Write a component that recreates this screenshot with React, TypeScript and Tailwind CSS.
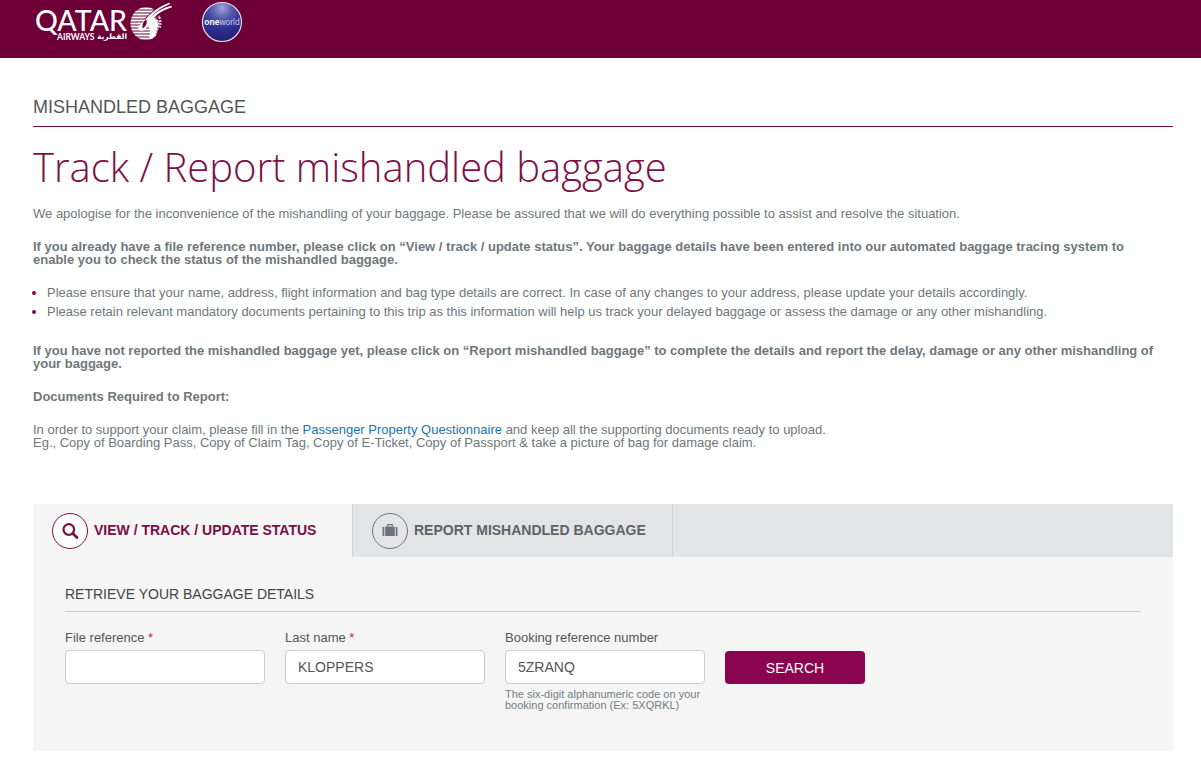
import { useState, type ReactNode } from "react";

function QatarLogo() {
  return (
    <svg viewBox="0 0 140 44" className="h-11 w-[140px]" role="img" aria-label="Qatar Airways">
      <g fill="#fff">
        <text x="2" y="31" fontFamily="Lato, sans-serif" fontSize="28.500" fontWeight="500">
          QATAR
        </text>
        <text x="24" y="40" fontFamily="Lato, sans-serif" fontSize="8.500" fontWeight="700">
          AIRWAYS
        </text>
        <text x="94" y="39" textAnchor="end" direction="ltr" fontFamily="'DejaVu Sans', sans-serif" fontSize="7.500" fontWeight="700">
          القطرية
        </text>
      </g>
      <defs>
        <clipPath id="emblem">
          <ellipse cx="113" cy="23.500" rx="15.500" ry="16.500" />
        </clipPath>
      </defs>
      <g clipPath="url(#emblem)">
        <path
          stroke="#fff"
          strokeWidth="1.900"
          d="M96 8.500h34M96 11.500h34M96 14.500h34M96 17.500h34M96 20.500h34M96 23.500h34M96 26.500h34M96 29.500h34M96 32.500h34M96 35.500h34M96 38.500h34"
        />
      </g>
      <path
        fill="#6c0036"
        d="M112 19C115 14 124 6.500 136 2.500L140 8C133 10.500 127 14 123 18C127 21 127.500 25 126 28C124 31 124 35 122 38L128 41L132 30V20L125 17L113 20Z"
      />
      <path stroke="#fff" strokeWidth="1.700" d="M125.500 18h2M126 21h2.500M126.500 24h2M126.500 27h1.500" />
      <path
        fill="#fff"
        d="M112.500 19.500C117 13.500 126 6.500 136.500 2.800L137 4C128.500 7.800 121.500 12.500 117.500 17.500C123 11.800 130.500 7.800 138.500 5.800L139 7.200C131 9.800 124.500 13.500 121 18C124 20 125.500 22.500 125 25C123.500 28 124.500 32 121 37C119.500 38.500 117 38.500 116 36.500C118.500 32.500 116 29 115.500 25C113 29 111 31.500 107.500 30.500C104 30 105 26 108 24Z"
      />
      <path fill="#6c0036" d="M109.500 28.500C109 24 110.500 21 113 19.500C114.500 21.500 114 26 109.500 28.500Z" />
    </svg>
  );
}

function OneworldLogo() {
  return (
    <svg viewBox="0 0 42 42" className="size-[42px]" role="img" aria-label="oneworld">
      <defs>
        <radialGradient id="globe" cx="50%" cy="14%" r="90%">
          <stop offset="0" stopColor="#a3a3d6" />
          <stop offset="0.3" stopColor="#5759ad" />
          <stop offset="0.6" stopColor="#2f2f90" />
          <stop offset="1" stopColor="#20206f" />
        </radialGradient>
      </defs>
      <circle cx="21" cy="21" r="19.500" fill="url(#globe)" stroke="#dfdbee" strokeWidth="1.200" />
      <text x="21" y="23.500" textAnchor="middle" fill="#fff" fontFamily="'Liberation Sans', sans-serif" fontSize="8.500">
        <tspan fontWeight="700">one</tspan>
        <tspan fill="#c8c8e8">world</tspan>
      </text>
    </svg>
  );
}

function SearchIcon() {
  return (
    <svg viewBox="0 0 18 18" className="size-[18px]" fill="none" stroke="currentColor" aria-hidden="true">
      <circle cx="7.800" cy="7.500" r="5.300" strokeWidth="2.200" />
      <path d="M11.800 11.500L16 15.500" strokeWidth="2.800" strokeLinecap="round" />
    </svg>
  );
}

function SuitcaseIcon() {
  return (
    <svg viewBox="0 0 18 18" className="size-[18px]" fill="currentColor" aria-hidden="true">
      <path d="M1.500 5h1.800v9H2.500Q1.500 14 1.500 13ZM4.200 4.500h9.600v9.500H4.200ZM14.700 5h.8q1 0 1 1v7q0 1-1 1h-.8Z" />
      <path d="M6.700 4.500V2.600h4.600v2" fill="none" stroke="currentColor" strokeWidth="1.200" />
    </svg>
  );
}

type TabProps = { active: boolean; onSelect: () => void; icon: ReactNode; children: ReactNode };

function Tab({ active, onSelect, icon, children }: TabProps) {
  return (
    <button
      type="button"
      role="tab"
      aria-selected={active}
      onClick={onSelect}
      className={
        active
          ? "flex h-[53px] w-80 items-center gap-1.5 border-r border-[#cfd2d5] bg-[#f5f5f5] pl-[19px] text-sm font-bold text-[#7a0f45]"
          : "flex h-[53px] w-80 items-center gap-1.5 border-r border-[#cfd2d5] bg-[#e2e4e6] pl-[19px] text-sm font-bold text-[#5f6369]"
      }
    >
      <span
        className={
          active
            ? "flex size-9 items-center justify-center rounded-full border border-current bg-white"
            : "flex size-9 items-center justify-center rounded-full border border-current text-[#6b7480]"
        }
      >
        {icon}
      </span>
      <span className="pb-0.5">{children}</span>
    </button>
  );
}

type FieldProps = { id: string; label: string; required?: boolean; value?: string; hint?: string };

function Field({ id, label, required, value, hint }: FieldProps) {
  return (
    <div className="w-[200px]">
      <label htmlFor={id} className="block text-[13px] leading-4 text-[#555]">
        {label} {required && <span className="text-[#d0213c]">*</span>}
      </label>
      <input
        id={id}
        type="text"
        defaultValue={value}
        className="mt-1 block h-[34px] w-full rounded border border-[#ccc] bg-white px-3 text-sm text-[#555]"
      />
      {hint && <p className="mt-[5px] text-[11px] leading-[11px] text-[#747d80]">{hint}</p>}
    </div>
  );
}

export default function App() {
  const [tab, setTab] = useState(0);
  return (
    <div className="min-h-screen bg-white font-['Liberation_Sans',Arial,sans-serif] text-[13px] leading-[13px] text-[#6f777b]">
      <header className="flex h-[58px] items-start gap-7 bg-[#6c0036] pl-[33px]">
        <a href="#" className="block">
          <QatarLogo />
        </a>
        <a href="#" className="block pt-px">
          <OneworldLogo />
        </a>
      </header>

      <main className="pt-[37px] pr-7 pb-2 pl-[33px]">
        <h2 className="border-b border-[#7d1048] pb-[7px] text-lg leading-6 text-[#555]">MISHANDLED BAGGAGE</h2>
        <h1 className="mt-4 font-['Open_Sans',sans-serif] text-[40px] leading-[48px] font-light text-[#7d1048]">
          Track / Report mishandled baggage
        </h1>
        <p className="mt-4">
          We apologise for the inconvenience of the mishandling of your baggage. Please be assured that we will do
          everything possible to assist and resolve the situation.
        </p>
        <p className="mt-5 pr-4 font-bold">
          If you already have a file reference number, please click on “View / track / update status”. Your baggage
          details have been entered into our automated baggage tracing system to enable you to check the status of the
          mishandled baggage.
        </p>
        <ul className="mt-[17px] list-disc pl-3.5 leading-[19px] marker:text-[#8e0550]">
          <li>
            Please ensure that your name, address, flight information and bag type details are correct. In case of any
            changes to your address, please update your details accordingly.
          </li>
          <li>
            Please retain relevant mandatory documents pertaining to this trip as this information will help us track
            your delayed baggage or assess the damage or any other mishandling.
          </li>
        </ul>
        <p className="mt-[23px] font-bold">
          If you have not reported the mishandled baggage yet, please click on “Report mishandled baggage” to complete
          the details and report the delay, damage or any other mishandling of your baggage.
        </p>
        <p className="mt-5 font-bold">Documents Required to Report:</p>
        <p className="mt-5">
          In order to support your claim, please fill in the{" "}
          <a href="#" className="text-[#1e73ab]">
            Passenger Property Questionnaire
          </a>{" "}
          and keep all the supporting documents ready to upload.
          <br />
          Eg., Copy of Boarding Pass, Copy of Claim Tag, Copy of E-Ticket, Copy of Passport &amp; take a picture of bag
          for damage claim.
        </p>

        <section className="mt-[55px] bg-[#f5f5f5]">
          <div role="tablist" className="flex bg-[#e2e4e6]">
            <Tab active={tab === 0} onSelect={() => setTab(0)} icon={<SearchIcon />}>
              VIEW / TRACK / UPDATE STATUS
            </Tab>
            <Tab active={tab === 1} onSelect={() => setTab(1)} icon={<SuitcaseIcon />}>
              REPORT MISHANDLED BAGGAGE
            </Tab>
          </div>
          <div className="px-8 pt-7 pb-10">
            <h3 className="border-b border-[#ccc] pb-2 text-sm leading-[18px] text-[#444]">
              RETRIEVE YOUR BAGGAGE DETAILS
            </h3>
            <form className="mt-[18px] flex flex-wrap items-start gap-5" onSubmit={(e) => e.preventDefault()}>
              <Field id="file-reference" label="File reference" required />
              <Field id="last-name" label="Last name" required value="KLOPPERS" />
              <Field
                id="booking-reference"
                label="Booking reference number"
                value="5ZRANQ"
                hint="The six-digit alphanumeric code on your booking confirmation (Ex: 5XQRKL)"
              />
              <button type="submit" className="mt-[21px] h-[33px] w-[140px] rounded bg-[#8b0450] text-sm text-white">
                SEARCH
              </button>
            </form>
          </div>
        </section>
      </main>
    </div>
  );
}
